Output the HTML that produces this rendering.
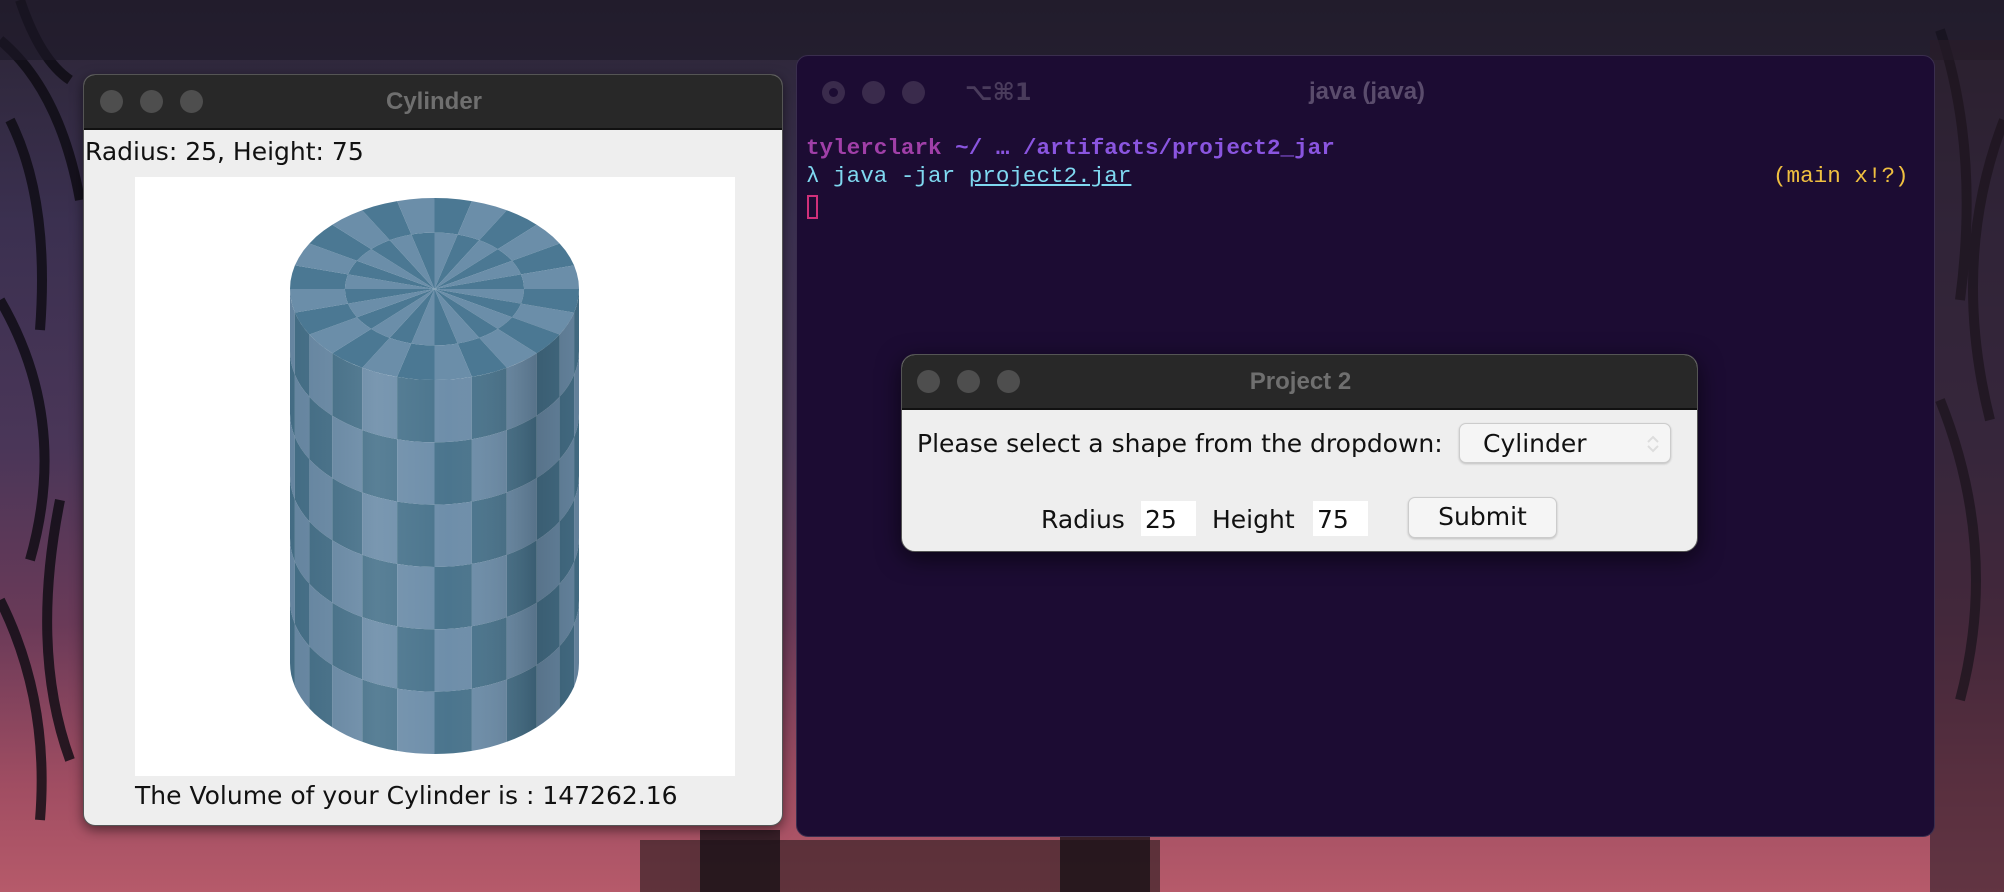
<!DOCTYPE html>
<html><head><meta charset="utf-8"><style>
*{margin:0;padding:0;box-sizing:border-box}
html,body{width:2004px;height:892px;overflow:hidden}
body{position:relative;font-family:"DejaVu Sans","Liberation Sans",sans-serif;
background:linear-gradient(180deg,#2b2535 0%,#3b3050 25%,#4a3658 50%,#6a3a58 70%,#a04d62 88%,#b65a6a 100%);}
.abs{position:absolute}
.tb{background:#282828;border-bottom:2px solid #111}
.dot{position:absolute;width:23px;height:23px;border-radius:50%;background:#4e4e4e}
.ttl{position:absolute;color:#6f6f6f;font-weight:bold;font-size:24px;text-align:center;font-family:"Liberation Sans",sans-serif}
.mono{font-family:"Liberation Mono","DejaVu Sans Mono",monospace;font-size:22.6px;position:absolute;white-space:pre}
.jt{font-size:25px;color:#111}
</style></head><body>
<svg class="abs" style="left:0;top:0" width="2004" height="892">
<g stroke="#0d0b12" stroke-width="10" fill="none" opacity="0.8">
<path d="M0 40 Q60 90 80 200"/><path d="M10 120 Q50 200 40 330"/><path d="M0 300 Q70 420 30 560"/>
<path d="M20 0 Q40 60 70 80"/><path d="M0 600 Q50 700 40 820"/><path d="M60 500 Q30 650 70 760"/>
<path d="M1940 30 Q1980 150 1960 300"/><path d="M2004 120 Q1950 260 1990 420"/><path d="M1940 400 Q2000 550 1960 700"/>
</g>
<rect x="0" y="0" width="2004" height="60" fill="#1d1826" opacity="0.6"/>
<rect x="640" y="840" width="520" height="52" fill="#3a2228" opacity="0.7"/>
<rect x="700" y="830" width="80" height="62" fill="#1a1218" opacity="0.8"/>
<rect x="1060" y="835" width="90" height="57" fill="#1a1218" opacity="0.8"/>
<rect x="1930" y="40" width="74" height="852" fill="#2a1c28" opacity="0.6"/>
</svg>

<div class="abs" style="left:83px;top:74px;width:700px;height:752px;background:#eeeeee;border-radius:12px;overflow:hidden;border:1px solid #555;box-shadow:0 4px 12px rgba(0,0,0,.5)">
 <div class="tb abs" style="left:0;top:0;width:700px;height:55px">
  <div class="dot" style="left:16px;top:15px"></div><div class="dot" style="left:56px;top:15px"></div><div class="dot" style="left:96px;top:15px"></div>
  <div class="ttl" style="left:0;width:700px;top:13px">Cylinder</div>
 </div>
 <div class="abs jt" style="left:1px;top:62px">Radius: 25, Height: 75</div>
 <div class="abs" style="left:51px;top:102px;width:600px;height:599px;background:#fff"></div>
 <div class="abs jt" style="left:51px;top:706px">The Volume of your Cylinder is : 147262.16</div>
</div>
<svg class="abs" style="left:0;top:0" width="800" height="892">
 <defs>
  <linearGradient id="sh" x1="0" x2="1" y1="0" y2="0">
   <stop offset="0" stop-color="#000" stop-opacity="0.05"/>
   <stop offset="0.3" stop-color="#fff" stop-opacity="0.1"/>
   <stop offset="0.55" stop-color="#fff" stop-opacity="0.02"/>
   <stop offset="0.85" stop-color="#000" stop-opacity="0.18"/>
   <stop offset="1" stop-color="#000" stop-opacity="0.08"/>
  </linearGradient>
 </defs>
 <g id="body"></g>
</svg>

<div class="abs" style="left:796px;top:55px;width:1139px;height:782px;background:#1c0c33;border-radius:12px;border:1px solid #3a2e4e">
 <div class="dot" style="left:25px;top:25px;background:#3a2b4c"></div><div class="dot" style="left:65px;top:25px;background:#3a2b4c"></div><div class="dot" style="left:105px;top:25px;background:#3a2b4c"></div>
 <div class="abs" style="left:32px;top:32px;width:9px;height:9px;border-radius:50%;background:#1c0c33"></div>
 <div class="abs" style="left:168px;top:22px;color:#4a3c5c;font-size:24px;font-weight:bold">⌥⌘1</div>
 <div class="abs" style="left:450px;width:240px;text-align:center;top:22px;color:#5a4c6c;font-size:24px;font-weight:bold;font-family:'Liberation Sans',sans-serif">java (java)</div>
 <div class="mono" style="left:9px;top:79px;font-weight:bold"><span style="color:#a03fa8">tylerclark</span> <span style="color:#8a55e0">~/ … /artifacts/project2_jar</span></div>
 <div class="mono" style="left:9px;top:107px;color:#7fd8f0">λ java -jar <span style="text-decoration:underline">project2.jar</span></div>
 <div class="mono" style="left:976px;top:107px;color:#f0c040">(main x!?)</div>
 <div class="abs" style="left:10px;top:139px;width:11px;height:24px;border:2px solid #d0307a"></div>
</div>

<div class="abs" style="left:901px;top:354px;width:797px;height:198px;background:#eeeeee;border-radius:14px;overflow:hidden;border:1px solid #555;box-shadow:0 6px 24px rgba(0,0,0,.6)">
 <div class="tb abs" style="left:0;top:0;width:797px;height:55px">
  <div class="dot" style="left:15px;top:15px"></div><div class="dot" style="left:55px;top:15px"></div><div class="dot" style="left:95px;top:15px"></div>
  <div class="ttl" style="left:0;width:797px;top:13px">Project 2</div>
 </div>
 <div class="abs jt" style="left:15px;top:74px">Please select a shape from the dropdown:</div>
 <div class="abs" style="left:557px;top:68px;width:212px;height:40px;background:#f5f5f5;border:1px solid #ccc;border-radius:7px;box-shadow:0 1px 2px rgba(0,0,0,.2)">
  <div class="abs jt" style="left:23px;top:5px">Cylinder</div>
  <svg class="abs" style="left:186px;top:10px" width="14" height="20"><path d="M2 8 L7 3 L12 8 M2 12 L7 17 L12 12" stroke="#ddd" stroke-width="2" fill="none"/></svg>
 </div>
 <div class="abs jt" style="left:139px;top:150px">Radius</div>
 <div class="abs" style="left:239px;top:146px;width:55px;height:35px;background:#fff"></div>
 <div class="abs jt" style="left:243px;top:150px">25</div>
 <div class="abs jt" style="left:310px;top:150px">Height</div>
 <div class="abs" style="left:411px;top:146px;width:55px;height:35px;background:#fff"></div>
 <div class="abs jt" style="left:415px;top:150px">75</div>
 <div class="abs jt" style="left:506px;top:142px;width:149px;height:41px;background:#f5f5f5;border:1px solid #ccc;border-radius:7px;box-shadow:0 1px 2px rgba(0,0,0,.2);text-align:center;line-height:38px">Submit</div>
</div>

<script>
(function(){
 var g=document.getElementById('body');
 var cx=434.5,rx=144.5,ry=91,top=289,bot=663,rows=6,h=(bot-top)/rows;
 var L='#6b8ca8',D='#47728b';var s='';
 function P(phi,cy){return (cx-rx*Math.cos(phi)).toFixed(1)+','+(cy+ry*Math.sin(phi)).toFixed(1);}
 for(var r=0;r<rows;r++){for(var c=0;c<12;c++){
  var a=c*Math.PI/12,b=(c+1)*Math.PI/12,pts=[],k;
  for(k=0;k<=4;k++)pts.push(P(a+(b-a)*k/4,top+r*h));
  for(k=4;k>=0;k--)pts.push(P(a+(b-a)*k/4,top+(r+1)*h));
  s+='<polygon points="'+pts.join(' ')+'" fill="'+((r+c)%2?D:L)+'"/>';
 }}
 var sp=[];for(var k=0;k<=24;k++)sp.push(P(Math.PI*k/24,bot));
 s+='<path d="M290,'+top+' L'+sp.join(' L')+' L579,'+top+' Z" fill="url(#sh)"/>';
 for(var i=0;i<24;i++){for(var ring=0;ring<2;ring++){
  var t0=ring?0.62:0,t1=ring?1:0.62,a0=i*Math.PI/12,a1=(i+1)*Math.PI/12,pts=[];
  for(k=0;k<=3;k++){var an=a0+(a1-a0)*k/3;pts.push((cx+rx*t1*Math.cos(an)).toFixed(1)+','+(top+ry*t1*Math.sin(an)).toFixed(1));}
  for(k=3;k>=0;k--){var an=a0+(a1-a0)*k/3;pts.push((cx+rx*t0*Math.cos(an)).toFixed(1)+','+(top+ry*t0*Math.sin(an)).toFixed(1));}
  s+='<polygon points="'+pts.join(' ')+'" fill="'+((i+ring)%2?'#4b7893':'#6b8ea9')+'"/>';
 }}
 g.innerHTML=s;
})();
</script>
</body></html>
